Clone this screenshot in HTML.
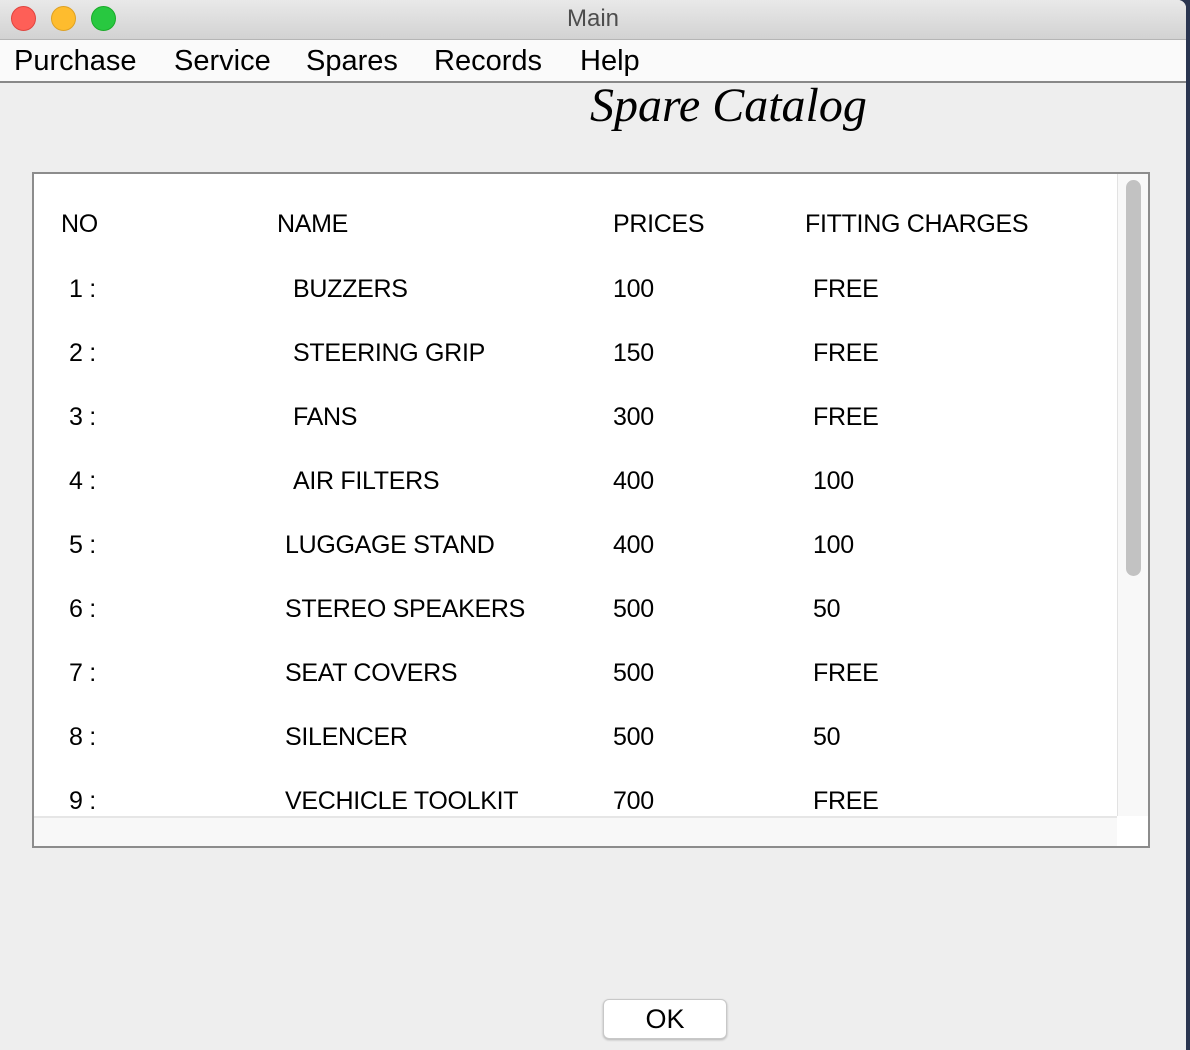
<!DOCTYPE html>
<html><head><meta charset="utf-8"><style>
*{margin:0;padding:0;box-sizing:border-box}
body{width:1190px;height:1050px;overflow:hidden;background:#2a3550;font-family:"Liberation Sans",sans-serif;position:relative}
.win{position:absolute;left:0;top:0;width:1186px;height:1050px;background:#eeeeee;border-top-right-radius:8px;overflow:hidden}
.title{position:absolute;left:0;top:0;width:100%;height:40px;background:linear-gradient(#e9e9e9,#d2d2d2);border-bottom:1px solid #b5b5b5}
.dot{position:absolute;top:6px;width:25px;height:25px;border-radius:50%}
.ttl{position:absolute;left:0;width:100%;top:5px;text-align:center;font-size:24px;color:#4d4d4d}
.menu{position:absolute;left:0;top:40px;width:100%;height:43px;background:#fafafa;border-bottom:2px solid #888}
.menu span{position:absolute;top:5px;font-size:29px;color:#000}
.h{position:absolute;left:590px;top:78px;font-family:"Liberation Serif",serif;font-style:italic;font-size:48px;color:#000}
.box{position:absolute;left:32px;top:172px;width:1118px;height:676px;border:2px solid #8c8c8c;background:#fff}
.t{position:absolute;font-size:25px;line-height:30px;color:#000;letter-spacing:-0.3px;margin-top:-2px}
.vs{position:absolute;left:1083px;top:0;width:31px;height:642px;background:#f8f8f8;border-left:1px solid #e2e2e2}
.th{position:absolute;left:8px;top:6px;width:15px;height:396px;border-radius:8px;background:#c2c2c2}
.hs{position:absolute;left:0;top:642px;width:1083px;height:30px;background:#f8f8f8;border-top:2px solid #e6e6e6}
.ok{position:absolute;left:603px;top:999px;width:124px;height:40px;background:#fff;border:1px solid #c8c8c8;border-radius:6px;box-shadow:0 1px 2px rgba(0,0,0,.25);text-align:center;font-size:27px;line-height:38px}
</style></head><body>
<div class="win">
<div class="title">
<div class="dot" style="left:11px;background:#fe5f57;border:1px solid #e0443e"></div>
<div class="dot" style="left:51px;background:#febc2e;border:1px solid #dea123"></div>
<div class="dot" style="left:91px;background:#28c840;border:1px solid #1aab29"></div>
<div class="ttl">Main</div>
</div>
<div class="menu">
<span style="left:14px">Purchase</span><span style="left:174px">Service</span><span style="left:306px">Spares</span><span style="left:434px">Records</span><span style="left:580px">Help</span>
</div>
<div class="h">Spare Catalog</div>
<div class="box">
<div class="t" style="left:27px;top:37px">NO</div>
<div class="t" style="left:243px;top:37px">NAME</div>
<div class="t" style="left:579px;top:37px">PRICES</div>
<div class="t" style="left:771px;top:37px">FITTING CHARGES</div>

<div class="t" style="left:35px;top:102px">1 :</div><div class="t" style="left:259px;top:102px">BUZZERS</div><div class="t" style="left:579px;top:102px">100</div><div class="t" style="left:779px;top:102px">FREE</div>
<div class="t" style="left:35px;top:166px">2 :</div><div class="t" style="left:259px;top:166px">STEERING GRIP</div><div class="t" style="left:579px;top:166px">150</div><div class="t" style="left:779px;top:166px">FREE</div>
<div class="t" style="left:35px;top:230px">3 :</div><div class="t" style="left:259px;top:230px">FANS</div><div class="t" style="left:579px;top:230px">300</div><div class="t" style="left:779px;top:230px">FREE</div>
<div class="t" style="left:35px;top:294px">4 :</div><div class="t" style="left:259px;top:294px">AIR FILTERS</div><div class="t" style="left:579px;top:294px">400</div><div class="t" style="left:779px;top:294px">100</div>
<div class="t" style="left:35px;top:358px">5 :</div><div class="t" style="left:251px;top:358px">LUGGAGE STAND</div><div class="t" style="left:579px;top:358px">400</div><div class="t" style="left:779px;top:358px">100</div>
<div class="t" style="left:35px;top:422px">6 :</div><div class="t" style="left:251px;top:422px">STEREO SPEAKERS</div><div class="t" style="left:579px;top:422px">500</div><div class="t" style="left:779px;top:422px">50</div>
<div class="t" style="left:35px;top:486px">7 :</div><div class="t" style="left:251px;top:486px">SEAT COVERS</div><div class="t" style="left:579px;top:486px">500</div><div class="t" style="left:779px;top:486px">FREE</div>
<div class="t" style="left:35px;top:550px">8 :</div><div class="t" style="left:251px;top:550px">SILENCER</div><div class="t" style="left:579px;top:550px">500</div><div class="t" style="left:779px;top:550px">50</div>
<div class="t" style="left:35px;top:614px">9 :</div><div class="t" style="left:251px;top:614px">VECHICLE TOOLKIT</div><div class="t" style="left:579px;top:614px">700</div><div class="t" style="left:779px;top:614px">FREE</div>

<div class="vs"><div class="th"></div></div>
<div class="hs"></div>
</div>
<div class="ok">OK</div>
</div>
</body></html>
